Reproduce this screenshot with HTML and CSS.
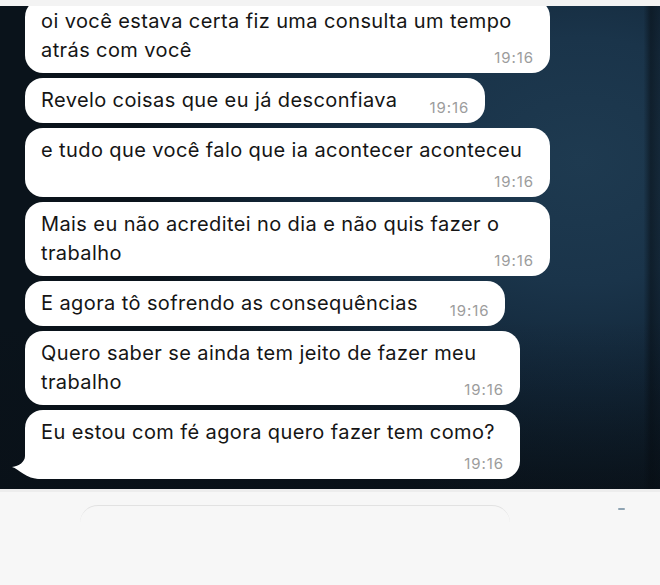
FILE: index.html
```html
<!DOCTYPE html>
<html lang="pt-BR">
<head>
<meta charset="utf-8">
<title>Conversa</title>
<link rel="stylesheet" href="styles.css">
</head>
<body>
<div class="screen">
  <div class="topbar"></div>
  <main class="chat">
    <div class="bubble wide">
      <p class="line">oi você estava certa fiz uma consulta um tempo</p>
      <div class="last"><span class="line">atrás com você</span><time class="time">19:16</time></div>
    </div>
    <div class="bubble inline">
      <span class="line">Revelo coisas que eu já desconfiava</span><time class="time">19:16</time>
    </div>
    <div class="bubble wide">
      <p class="line">e tudo que você falo que ia acontecer aconteceu</p>
      <time class="time own">19:16</time>
    </div>
    <div class="bubble wide">
      <p class="line">Mais eu não acreditei no dia e não quis fazer o</p>
      <div class="last"><span class="line">trabalho</span><time class="time">19:16</time></div>
    </div>
    <div class="bubble inline">
      <span class="line">E agora tô sofrendo as consequências</span><time class="time">19:16</time>
    </div>
    <div class="bubble mid">
      <p class="line">Quero saber se ainda tem jeito de fazer meu</p>
      <div class="last"><span class="line">trabalho</span><time class="time">19:16</time></div>
    </div>
    <div class="bubble mid tailed">
      <p class="line">Eu estou com fé agora quero fazer tem como?</p>
      <time class="time own">19:16</time>
      <svg class="tail" width="40" height="30" viewBox="0 0 40 30" aria-hidden="true">
        <path d="M15 0 L15 7 C15 13 9 17 2 18 C9 20 16 30 30 30 L40 30 L40 0 Z" fill="#ffffff"/>
      </svg>
    </div>
  </main>
  <footer class="composer">
    <div class="field"></div>
    <span class="mark"></span>
  </footer>
</div>
</body>
</html>
```

FILE: styles.css
```css
html, body {
  margin: 0;
  padding: 0;
  background: #f7f7f7;
}

.screen {
  width: 660px;
  height: 585px;
  overflow: hidden;
  display: flex;
  flex-direction: column;
  font-family: Inter, "Noto Sans", "Liberation Sans", sans-serif;
}

.topbar {
  height: 6px;
  flex: none;
  background: #f3f3f3;
}

.chat {
  height: 483px;
  flex: none;
  box-sizing: border-box;
  padding: 0 0 10px 25px;
  display: flex;
  flex-direction: column;
  justify-content: flex-end;
  align-items: flex-start;
  gap: 5px;
  overflow: hidden;
  background:
    linear-gradient(to right, rgba(6, 12, 18, 0) 0, rgba(6, 12, 18, 0) 97.5%, rgba(6, 12, 18, 0.55) 98.6%, rgba(6, 12, 18, 0.35) 100%),
    linear-gradient(to bottom, rgba(8, 14, 20, 0) 65%, rgba(8, 14, 20, 0.4) 100%),
    radial-gradient(ellipse 80% 85% at 88% 32%, #1e3a50 0%, #1a344a 30%, #122638 55%, #0a131b 85%);
}

.bubble {
  position: relative;
  flex: none;
  box-sizing: border-box;
  background: #ffffff;
  border-radius: 18px;
  padding: 8px 16px;
}

.wide {
  width: 525px;
}

.mid {
  width: 495px;
}

.inline {
  display: flex;
  align-items: flex-end;
  gap: 32px;
}

.line {
  margin: 0;
  font-size: 20px;
  line-height: 29px;
  letter-spacing: 0.4px;
  color: #151515;
  white-space: nowrap;
}

.last {
  display: flex;
  justify-content: space-between;
  align-items: flex-end;
}

.time {
  font-size: 15px;
  line-height: 14px;
  color: #9c9c9c;
  letter-spacing: 0.9px;
}

.own {
  display: block;
  text-align: right;
  margin-top: 10px;
}

.tailed {
  border-bottom-left-radius: 16px;
}

.tail {
  position: absolute;
  left: -15px;
  bottom: 0;
  display: block;
}

.composer {
  flex: 1;
  display: flex;
  align-items: flex-start;
  padding: 13px 0 0 80px;
  border-top: 3px solid #ededed;
  background: #f7f7f7;
}

.field {
  width: 430px;
  height: 40px;
  box-sizing: border-box;
  border-top: 1px solid #e2e2e2;
  border-radius: 18px 18px 0 0;
}

.mark {
  width: 7px;
  height: 2px;
  margin: 3px 0 0 108px;
  border-radius: 1px;
  background: #8fa4b3;
}
```
